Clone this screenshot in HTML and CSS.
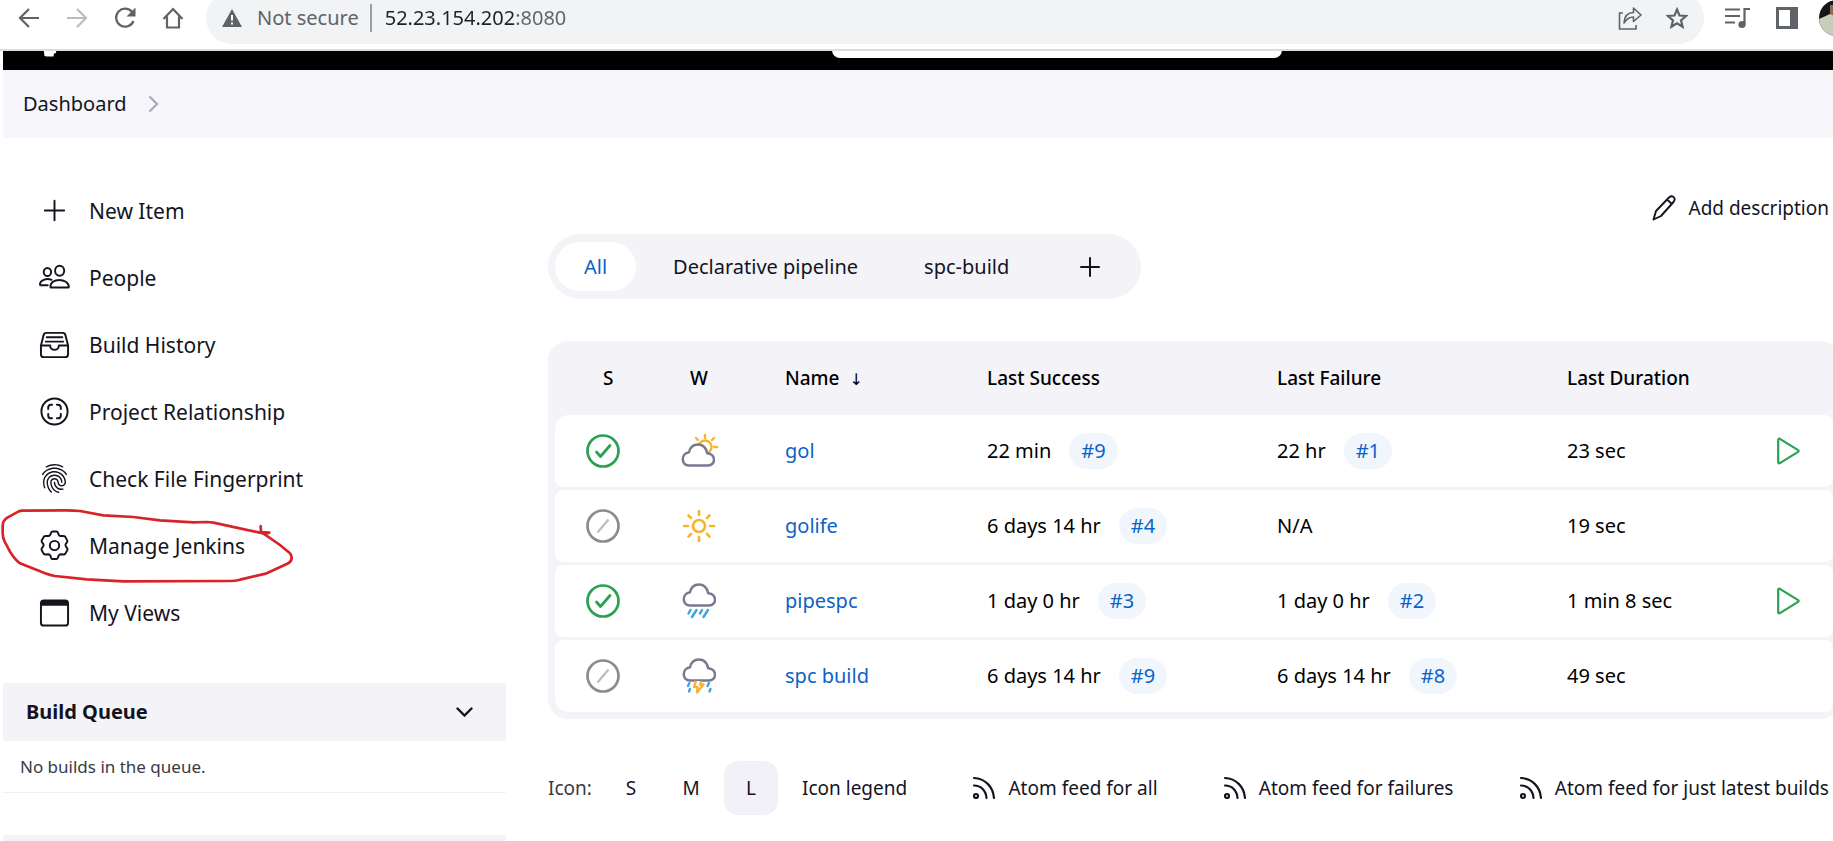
FILE: index.html
```html
<!DOCTYPE html>
<html lang="en">
<head>
<meta charset="utf-8">
<title>Dashboard [Jenkins]</title>
<link rel="stylesheet" href="styles.css">
</head>
<body>
<svg class="sprite" aria-hidden="true">
  <symbol id="rss" viewBox="0 0 24 24"><g fill="none" stroke="currentColor" stroke-width="2.200" stroke-linecap="round"><circle cx="4" cy="20" r="2"/><path d="M2 9.500c7 0 12 5 12.500 12.500M2 2c11 .5 19 8.500 20 20"/></g></symbol>
  <symbol id="ok" viewBox="0 0 34 34"><g fill="none" stroke="#2aa052" stroke-width="2.700" stroke-linecap="round" stroke-linejoin="round"><circle cx="17" cy="17" r="15.500"/><path d="M10.500 18l4 4.500 9.500-11"/></g></symbol>
  <symbol id="none" viewBox="0 0 34 34"><g fill="none" stroke="#8c8c90" stroke-width="2.700"><circle cx="17" cy="17" r="15.500"/><path stroke="#bcbcc2" stroke-width="2.200" d="M11.500 23.500l11-13"/></g></symbol>
  <symbol id="play" viewBox="0 0 24 28"><path fill="none" stroke="#2aa052" stroke-width="2.200" stroke-linejoin="round" d="M2.200 2.800v22.400c0 1 1 1.300 1.700.9l18.200-11.200c.7-.5.7-1.300 0-1.800L3.900 1.900c-.7-.4-1.700-.1-1.700.9z"/></symbol>
  <symbol id="cloud" viewBox="0 0 34 24"><path fill="#fff" stroke="#7a7890" stroke-width="2.500" stroke-linejoin="round" d="M8 22.500h19c8 0 8.300-11.500-.8-12.300C25 4.500 21.500 1.500 17 1.500c-4.500 0-8 3-9 7.800C-.3 10.500-.3 22.500 8 22.500z"/></symbol>
</svg>

<div class="toolbar">
  <button class="tool" aria-label="Back"><svg width="22" height="22" viewBox="0 0 22 22"><path class="ln" d="M21 11H2.500M11 2l-9 9 9 9"/></svg></button>
  <button class="tool faded" aria-label="Forward"><svg width="22" height="22" viewBox="0 0 22 22"><path class="ln" d="M1 11h18.500M11 2l9 9-9 9"/></svg></button>
  <button class="tool" aria-label="Reload"><svg width="22" height="22" viewBox="0 0 22 22"><path class="ln" d="M18.500 5.500A9 9 0 1 0 19.500 14"/><path fill="currentColor" d="M21.500.5v9h-9z"/></svg></button>
  <button class="tool" aria-label="Home"><svg width="22" height="22" viewBox="0 0 22 22"><path class="ln" d="M1.500 12L11 2l9.500 10M5 9.500V20.500h12V9.500"/></svg></button>
  <div class="address">
    <svg width="20" height="18" viewBox="0 0 20 18"><path fill="#5f6368" d="M10 0l10 18H0z"/><path stroke="#fff" stroke-width="2" d="M10 6v5.500M10 13.500v2"/></svg>
    <label class="insecure" for="url">Not secure</label>
    <input id="url" class="url" type="text" value="52.23.154.202:8080">
    <button class="tool" aria-label="Share"><svg width="24" height="24" viewBox="0 0 24 24"><g fill="none" stroke="currentColor" stroke-width="1.600"><path d="M5 7H1.500v16H18v-4"/><path stroke-linejoin="round" d="M6 17c.5-7 4-10.500 9.500-10.500V2L23 9l-7.500 6.500v-4.500C11 11 8.500 13 6 17z"/></g></svg></button>
    <button class="tool" aria-label="Bookmark"><svg width="22" height="22" viewBox="0 0 22 22"><path fill="none" stroke="currentColor" stroke-width="2.200" d="M11 2.500l2.500 6 6.500.5-5 4.300 1.600 6.500L11 16.300l-5.600 3.500L7 13.300 2 9l6.500-.5z"/></svg></button>
  </div>
  <button class="tool" aria-label="Media"><svg width="25" height="22" viewBox="0 0 25 22"><path fill="none" stroke="currentColor" stroke-width="2.200" d="M0 2.500h15M0 9h15M0 15.500h10M19.500 17.500V2H25"/><circle cx="17" cy="17.500" r="3.600" fill="currentColor"/></svg></button>
  <button class="tool" aria-label="Side panel"><svg width="22" height="22" viewBox="0 0 22 22"><path fill="currentColor" d="M0 0h22v22H0z"/><path fill="#fff" d="M3 3h11v16H3z"/></svg></button>
  <button class="tool avatar" aria-label="Profile"><svg width="36" height="36" viewBox="0 0 36 36"><clipPath id="av"><circle cx="18" cy="18" r="18"/></clipPath><g clip-path="url(#av)"><path fill="#15151a" d="M0 0h36v36H0z"/><path fill="#8a6a58" d="M11 5h14v12H11z"/><path fill="#c9cdbc" d="M0 19l11-5 8 4v18H0z"/></g></svg></button>
</div>

<div class="page">
  <header class="topbar">
    <svg class="logo" width="14" height="12" viewBox="0 0 14 12"><path fill="#fff" d="M0 0h14l-1 8-2 .5-.5 3H4L1.500 11z"/></svg>
    <input class="search" type="search" aria-label="Search">
  </header>
  <nav class="crumbs"><a href="#">Dashboard</a><svg width="11" height="18" viewBox="0 0 11 18"><path fill="none" stroke="#a9a9bb" stroke-width="2.200" d="M1.500 1.500L9 9l-7.500 7.500"/></svg></nav>

  <div class="columns">
    <aside class="side">
      <nav class="tasks">
        <a href="#"><svg viewBox="0 0 32 32"><path class="ic" d="M16 6v20M6 16h20"/></svg>New Item</a>
        <a href="#"><svg viewBox="0 0 32 32"><g class="ic"><ellipse cx="21.300" cy="9" rx="4.700" ry="5.200"/><ellipse cx="8.700" cy="10.300" rx="3.800" ry="4.200"/><path d="M11.800 25.700c-.7-9.500 18.800-9.500 19 0 0 .4-.4.700-.8.700H12.600c-.5 0-.8-.3-.8-.7zM9 24H1.800c-.5 0-.8-.3-.8-.8 0-4.300 6.500-7 12-4.800"/></g></svg>People</a>
        <a href="#"><svg viewBox="0 0 32 32"><g class="ic"><path d="M2 17V26a3 3 0 0 0 3 3h22a3 3 0 0 0 3-3v-9L27.300 6.500A3 3 0 0 0 24.400 4H7.600a3 3 0 0 0-2.900 2.500zM2 17h9.500c0 6 9 6 9 0H30M8 8.500h16M7 13h18"/></g></svg>Build History</a>
        <a href="#"><svg viewBox="0 0 32 32"><g class="ic"><circle cx="16" cy="16" r="13.500"/><path d="M9.500 13.500v-1.500a3 3 0 0 1 3-3h1M18.500 9h1a3 3 0 0 1 3 3v1.500M22.500 18.500V20a3 3 0 0 1-3 3h-1M13.500 23h-1a3 3 0 0 1-3-3v-1.500"/></g></svg>Project Relationship</a>
        <a href="#"><svg viewBox="0 0 512 512"><path fill="currentColor" d="M390.420 75.280a10.450 10.450 0 01-5.320-1.440C340.720 50.080 302.350 40 256.350 40c-45.770 0-89.230 11.280-128.760 33.840C122 77 115.110 74.800 111.870 69a12.400 12.400 0 014.630-16.320A281.810 281.810 0 01256.350 16c49.230 0 92.230 11.280 139.390 36.480a12 12 0 014.850 16.080 11.300 11.300 0 01-10.170 6.720zm-330.790 126a11.730 11.730 0 01-6.700-2.160 12.260 12.260 0 01-2.780-16.800c22.890-33.600 52-60 86.690-78.480C209.420 65 302.350 64.720 375.160 103.600c34.680 18.480 63.800 44.640 86.690 78a12.290 12.290 0 01-2.780 16.800 11.260 11.260 0 01-16.180-2.880c-20.800-30.240-47.150-54-78.360-70.560-66.340-35.280-151.180-35.280-217.290.24-31.440 16.800-57.790 40.800-78.590 71a10 10 0 01-9.020 5.080zM204.100 491a10.660 10.660 0 01-8.090-3.600C175.900 466.480 165 453 149.550 424c-16-29.520-24.270-65.520-24.270-104.160 0-71.280 58.940-129.360 131.300-129.360S387.880 248.560 387.880 319.840a11.560 11.560 0 11-23.110 0c0-58.080-48.540-105.360-108.190-105.360S148.390 261.760 148.390 319.840c0 34.560 7.400 66.480 21.490 92.400 14.800 27.600 25 39.360 42.770 58.080a12.670 12.670 0 010 17 12.440 12.440 0 01-8.550 3.680zm165.750-44.400c-27.510 0-51.780-7.200-71.660-21.360a129.100 129.100 0 01-55-105.360 11.570 11.570 0 1123.120 0 104.280 104.280 0 0044.840 85.440c16.410 11.520 35.600 17 58.720 17a147.410 147.410 0 0024-2.400c6.240-1.200 12.250 3.120 13.400 9.840a11.920 11.920 0 01-9.470 13.920 152.280 152.280 0 01-27.950 2.880zM323.380 496a13 13 0 01-3-.48c-36.760-10.560-60.800-24.720-86-50.400-32.370-33.360-50.160-77.760-50.160-125.280 0-38.880 31.900-70.560 71.190-70.560s71.200 31.680 71.200 70.560c0 25.680 21.500 46.560 48.080 46.560s48.080-20.880 48.080-46.560c0-90.480-75.130-163.920-167.590-163.920-65.650 0-125.750 37.920-152.790 96.720-9 19.440-13.640 42.240-13.640 67.200 0 18.720 1.610 48.240 15.480 86.640 2.320 6.240-.69 13.200-6.700 15.360a11.340 11.340 0 01-14.790-7 276.390 276.390 0 01-16.880-95c0-28.800 5.320-55 15.720-77.760 30.750-67 98.940-110.400 173.600-110.400 105.180 0 190.710 84.240 190.710 187.920 0 38.880-31.900 70.560-71.200 70.560s-71.200-31.680-71.200-70.560C303.500 293.920 282 273 255.420 273s-48.080 20.880-48.080 46.560c0 41 15.260 79.440 43.230 108.240 22 22.560 43 35 75.590 44.400 6.240 1.680 9.710 8.400 8.090 14.640a11.390 11.390 0 01-10.870 9.160z"/></svg>Check File Fingerprint</a>
        <a href="#"><svg viewBox="0 0 32 32"><g class="ic"><circle cx="16" cy="16" r="4.800"/><path d="M12.600 2.500Q13 1.500 14 1.500h4q1 0 1.400 1l.9 2.300q.4 1 1.400 1.300l3.800.1q1 0 1.600.9l2 3.600q.5 1-.1 1.800l-1.400 2q-.6 1 0 2l1.500 2.500q.6.900.1 1.900l-2 3.500q-.6.900-1.600.9l-3.300-.2q-1.300 0-1.900 1.100l-1 2.700q-.4 1.100-1.400 1.100h-4q-1 0-1.400-1l-1-2.800q-.6-1.100-1.900-1.100l-3.300.2q-1 0-1.600-.9l-2-3.500q-.5-1 .1-1.900L4.500 16.500q.6-1 0-2l-1.500-2q-.6-.9-.1-1.900l2-3.500q.6-.9 1.600-.9l3.300-.1q1.300 0 1.900-1.200z"/></g></svg>Manage Jenkins
          <svg class="scribble" viewBox="0 255 900 240"><path d="M240 273Q220 271 200 271L65 272 56 274 22 293Q8 302 8 318V340Q8 352 14 365L30 395Q46 420 60 430L135 460Q150 466 165 468L260 478 370 484 690 483Q705 483 720 479L800 460 865 430Q882 418 870 400L840 375 790 340 640 308Q630 306 620 306L580 307 480 301 400 291 310 286z"/><path d="M782 318L783 336 808 338 792 342"/></svg></a>
        <a href="#"><svg viewBox="0 0 32 32"><rect class="ic" x="2" y="3.500" width="28" height="26" rx="3"/><path fill="currentColor" d="M2 9V6q0-3 3-3h22q3 0 3 3v3z"/></svg>My Views</a>
      </nav>
      <section class="pane">
        <h2>Build Queue<button aria-label="Collapse build queue"><svg width="17" height="10" viewBox="0 0 17 10"><path fill="none" stroke="currentColor" stroke-width="2.400" stroke-linecap="round" d="M1.500 1.500l7 7 7-7"/></svg></button></h2>
        <p>No builds in the queue.</p>
      </section>
      <section class="pane next"></section>
    </aside>

    <main class="main">
      <div class="describe"><a href="#"><svg width="24" height="26" viewBox="0 0 24 26"><path fill="none" stroke="currentColor" stroke-width="1.900" stroke-linejoin="round" d="M1.500 24.500L4 16 17 2.500q3-2.500 5 0 1.500 2-.5 4.500L9 21zM15 4.500l5 4.500"/></svg>Add description</a></div>
      <nav class="tabs">
        <a class="on" href="#">All</a><a href="#">Declarative pipeline</a><a href="#">spc-build</a>
        <a href="#" aria-label="New view" class="plus"><svg width="20" height="20" viewBox="0 0 20 20"><path class="ic" d="M10 1v18M1 10h18"/></svg></a>
      </nav>
      <div class="wrap">
        <table>
          <colgroup><col class="c1"><col class="c2"><col class="c3"><col class="c4"><col class="c4"><col class="c6"><col class="c7"></colgroup>
          <thead><tr><th>S</th><th>W</th><th>Name&nbsp; <span class="arrow">↓</span></th><th>Last Success</th><th>Last Failure</th><th>Last Duration</th><th></th></tr></thead>
          <tbody>
            <tr><td><svg width="34" height="34"><use href="#ok"/></svg></td>
              <td><svg width="38" height="36" viewBox="1 0 38 36"><g fill="none" stroke="#f9b32f" stroke-width="2.400" stroke-linecap="round"><circle cx="25" cy="14" r="6.500"/><path d="M25 2v3M34 5l-2 2M37 14h-3M16 5l2 2"/></g><use href="#cloud" x="1" y="10" width="34" height="24"/></svg></td>
              <td><a href="#">gol</a></td><td>22 min<a class="num" href="#">#9</a></td><td>22 hr<a class="num" href="#">#1</a></td><td>23 sec</td><td><button aria-label="Build gol"><svg width="24" height="28"><use href="#play"/></svg></button></td></tr>
            <tr><td><svg width="34" height="34"><use href="#none"/></svg></td>
              <td><svg width="36" height="36" viewBox="0 0 36 36"><g fill="none" stroke="#f9b32f" stroke-width="2.600" stroke-linecap="round"><circle cx="18" cy="18" r="6"/><path d="M18 3v4M18 29v4M3 18h4M29 18h4M7.500 7.500l2.500 2.500M26 26l2.500 2.500M7.500 28.500L10 26M26 10l2.500-2.500"/></g></svg></td>
              <td><a href="#">golife</a></td><td>6 days 14 hr<a class="num" href="#">#4</a></td><td>N/A</td><td>19 sec</td><td></td></tr>
            <tr><td><svg width="34" height="34"><use href="#ok"/></svg></td>
              <td><svg width="36" height="36" viewBox="0 0 36 36"><use href="#cloud" x="1" y="0" width="34" height="24"/><path fill="none" stroke="#3ba4e0" stroke-width="2.400" stroke-linecap="round" d="M9.500 27l-2 3.500M15.500 27L11 34M21 27l-2 3.500M27 27l-4.500 7"/></svg></td>
              <td><a href="#">pipespc</a></td><td>1 day 0 hr<a class="num" href="#">#3</a></td><td>1 day 0 hr<a class="num" href="#">#2</a></td><td>1 min 8 sec</td><td><button aria-label="Build pipespc"><svg width="24" height="28"><use href="#play"/></svg></button></td></tr>
            <tr><td><svg width="34" height="34"><use href="#none"/></svg></td>
              <td><svg width="36" height="36" viewBox="0 0 36 36"><use href="#cloud" x="1" y="0" width="34" height="24"/><path fill="none" stroke="#3ba4e0" stroke-width="2.400" stroke-linecap="round" d="M8.500 25l-1.500 3M9 31l-1 2.500M28 25l-1.500 3M29.500 31l-1 2.500"/><path fill="#fff" stroke="#f9b32f" stroke-width="2.400" stroke-linejoin="round" d="M15 23l-2 6h3.500L16 34.500l6.500-8H19l1-3.500"/></svg></td>
              <td><a href="#">spc build</a></td><td>6 days 14 hr<a class="num" href="#">#9</a></td><td>6 days 14 hr<a class="num" href="#">#8</a></td><td>49 sec</td><td></td></tr>
          </tbody>
        </table>
      </div>
      <footer class="foot">
        <span class="light">Icon:</span>
        <div class="sizes"><button>S</button><button>M</button><button class="on">L</button></div>
        <div class="feeds">
          <a href="#">Icon legend</a>
          <a href="#"><svg width="24" height="24"><use href="#rss"/></svg>Atom feed for all</a>
          <a href="#"><svg width="24" height="24"><use href="#rss"/></svg>Atom feed for failures</a>
          <a href="#"><svg width="24" height="24"><use href="#rss"/></svg>Atom feed for just latest builds</a>
        </div>
      </footer>
    </main>
  </div>
</div>
</body>
</html>
```
FILE: styles.css
```css
* { box-sizing: border-box; }
body { margin: 0; background: #fff; color: #14141f; font: 400 19px/28px "Noto Sans", "Open Sans", sans-serif; overflow: hidden; }
a { color: inherit; text-decoration: none; }
button { font: inherit; color: inherit; background: none; border: 0; padding: 0; }
svg { display: block; flex: none; }
.sprite { position: absolute; width: 0; height: 0; }
.ic { fill: none; stroke: currentColor; stroke-width: 2; stroke-linecap: round; stroke-linejoin: round; }
.ln { fill: none; stroke: currentColor; stroke-width: 2.2; }

.toolbar { display: flex; align-items: center; gap: 26px; height: 51px; padding: 0 0 14px 18px; border-bottom: 2px solid #dcdcdc; color: #5f6368; overflow: hidden; }
.faded { color: #b9bbbe; }
.address { flex: 1; display: flex; align-items: center; height: 52px; margin: 0 -5px 0 -4px; padding: 0 16px; border-radius: 26px; background: #f1f3f4; font-size: 20px; }
.insecure { margin-left: 15px; padding-right: 11px; border-right: 2px solid #9a9da1; }
.url { flex: 1; min-width: 0; margin-left: 13px; padding: 0; border: 0; outline: 0; font: inherit; color: transparent; background: linear-gradient(90deg, #202124 130px, #5f6368 130px); -webkit-background-clip: text; background-clip: text; }
.address .tool { margin-left: 24px; }
.avatar { margin: 0 -22px 0 -5px; }

.page { padding-left: 3px; }
.topbar { display: flex; align-items: flex-end; height: 19px; background: #000; overflow: hidden; }
.logo { margin: 0 775px 13px 40px; flex: none; }
.search { width: 450px; height: 36px; margin-bottom: 12px; border: 0; border-radius: 8px; background: #fff; flex: none; }
.crumbs { display: flex; align-items: center; gap: 21px; height: 68px; padding: 0 20px; background: #f5f5fa; font-size: 20px; }

.columns { display: flex; gap: 42px; align-items: flex-start; }
.side { flex: 0 0 503px; }
.tasks { padding: 39px 0 37px 36px; font-size: 21px; }
.tasks a { position: relative; display: flex; align-items: center; gap: 19px; height: 67px; }
.tasks svg { width: 31px; height: 31px; }
.tasks .scribble { position: absolute; left: -39px; top: -7px; width: 300px; height: 80px; fill: none; stroke: #d8232a; stroke-width: 8; stroke-linecap: round; stroke-linejoin: round; }
.pane { border-bottom: 1px solid #f0f0f5; margin-bottom: 42px; }
.pane h2 { display: flex; justify-content: space-between; align-items: center; margin: 0; height: 58px; padding: 0 33px 0 23px; font-size: 20px; font-weight: 700; background: #f3f3f8; }
.pane p { margin: 0; padding: 12px 17px; height: 51px; font-size: 17px; color: #3a3a44; }
.next { height: 58px; background: #f3f3f8; }

.main { flex: 1; min-width: 0; padding: 52px 4px 0 0; }
.describe { display: flex; justify-content: flex-end; margin-bottom: 8px; }
.describe a, .feeds a { display: flex; align-items: center; gap: 12px; height: 36px; }
.tabs { display: flex; width: max-content; gap: 8px; padding: 8px 7px; border-radius: 33px; background: #f3f3f8; font-size: 20px; }
.tabs a { display: flex; align-items: center; height: 49px; padding: 0 29px; border-radius: 25px; }
.tabs .on { background: #fff; color: #0b62c8; }
.tabs .plus { padding: 0 34px; }

.wrap { margin: 42px -11px 0 0; padding: 0 7px 4px; border-radius: 20px; background: #f3f3f8; }
table { width: 100%; table-layout: fixed; border-collapse: separate; border-spacing: 0 3px; color: #000; font-size: 20px; }
th { height: 68px; padding: 0 16px; text-align: left; font-weight: 500; font-size: 19px; }
th:first-child { padding-left: 48px; }
th:nth-child(2) { padding-left: 39px; }
.arrow { font: 16px/20px "DejaVu Sans", sans-serif; }
td { height: 72px; padding: 0 16px; background: #fff; }
td:first-child { padding-left: 31px; border-radius: 8px 0 0 8px; }
td:nth-child(2) { padding-left: 30px; }
td:nth-child(3) { color: #0b62c8; }
td:last-child { border-radius: 0 8px 8px 0; }
tr:first-child td:first-child { border-top-left-radius: 14px; }
tr:last-child td:first-child { border-bottom-left-radius: 14px; }
.c1 { width: 96px; } .c2 { width: 118px; } .c3 { width: 202px; } .c6 { width: 209px; } .c7 { width: 73px; }
td button { display: block; }
.num { display: inline-block; margin-left: 18px; padding: 0 12px; height: 36px; line-height: 36px; border-radius: 18px; background: #f0f6fc; color: #0b62c8; }

.foot { display: flex; align-items: center; margin-top: 42px; }
.light { width: 56px; color: #3a3a44; }
.sizes { display: flex; gap: 6px; margin-right: 24px; }
.sizes button { width: 54px; height: 54px; border-radius: 14px; }
.sizes .on { background: #f1f1f7; }
.feeds { flex: 1; display: flex; justify-content: space-between; white-space: nowrap; }
```
